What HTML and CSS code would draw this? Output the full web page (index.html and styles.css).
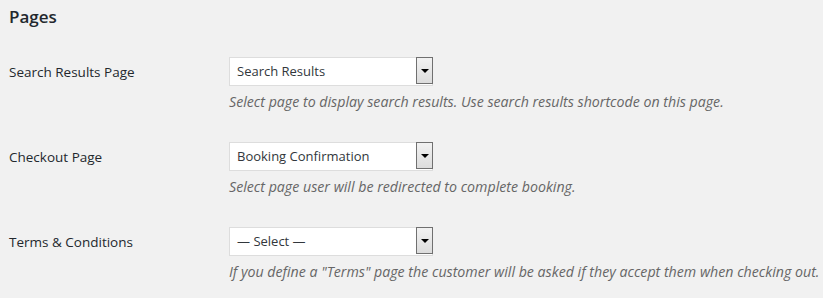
FILE: index.html
```html
<!DOCTYPE html>
<html lang="en">
<head>
<meta charset="UTF-8">
<title>Pages</title>
<link rel="stylesheet" href="styles.css">
</head>
<body>

<div class="wrap">
    <h2>Pages</h2>

    <div class="form-row">
        <div class="label">Search Results Page</div>
        <div class="field">
            <div class="select">
                <span class="select-value">Search Results</span>
                <span class="select-arrow"><i></i></span>
            </div>
            <p class="description">Select page to display search results. Use search results shortcode on this page.</p>
        </div>
    </div>

    <div class="form-row">
        <div class="label">Checkout Page</div>
        <div class="field">
            <div class="select">
                <span class="select-value">Booking Confirmation</span>
                <span class="select-arrow"><i></i></span>
            </div>
            <p class="description">Select page user will be redirected to complete booking.</p>
        </div>
    </div>

    <div class="form-row">
        <div class="label">Terms &amp; Conditions</div>
        <div class="field">
            <div class="select">
                <span class="select-value">&mdash; Select &mdash;</span>
                <span class="select-arrow"><i></i></span>
            </div>
            <p class="description">If you define a "Terms" page the customer will be asked if they accept them when checking out.</p>
        </div>
    </div>
</div>

</body>
</html>
```

FILE: styles.css
```css
body {
    margin: 0;
    background-color: #f1f1f1;
    font-family: "Open Sans", sans-serif;
    color: #23282d;
    font-size: 13px;
}

.wrap {
    padding: 0 0 0 9px;
}

h2 {
    margin: 0;
    padding-top: 5px;
    font-size: 17px;
    font-weight: 600;
    line-height: 24px;
}

.form-row {
    display: flex;
    padding-top: 30px;
}

.form-row:first-of-type {
    padding-top: 28px;
}

.label {
    width: 220px;
    padding-top: 5px;
    font-size: 13.5px;
    line-height: 20px;
}

.select {
    display: flex;
    width: 204px;
    height: 29px;
    box-sizing: border-box;
    background-color: #fff;
    border: 1px solid #ddd;
}

.select-value {
    flex: 1;
    padding-left: 7px;
    line-height: 27px;
    font-size: 13px;
    color: #32373c;
}

.select-arrow {
    display: flex;
    align-items: center;
    justify-content: center;
    width: 15px;
    margin: -1px -1px 1px 0;
    border: 1px solid #707070;
    background: linear-gradient(#f2f2f2, #dcdcdc);
}

.select-arrow i {
    width: 0;
    height: 0;
    border-left: 4px solid transparent;
    border-right: 4px solid transparent;
    border-top: 4px solid #000;
}

.description {
    margin: 6px 0 0;
    font-size: 14.2px;
    font-style: italic;
    color: #666;
    line-height: 20px;
    white-space: nowrap;
}
```
